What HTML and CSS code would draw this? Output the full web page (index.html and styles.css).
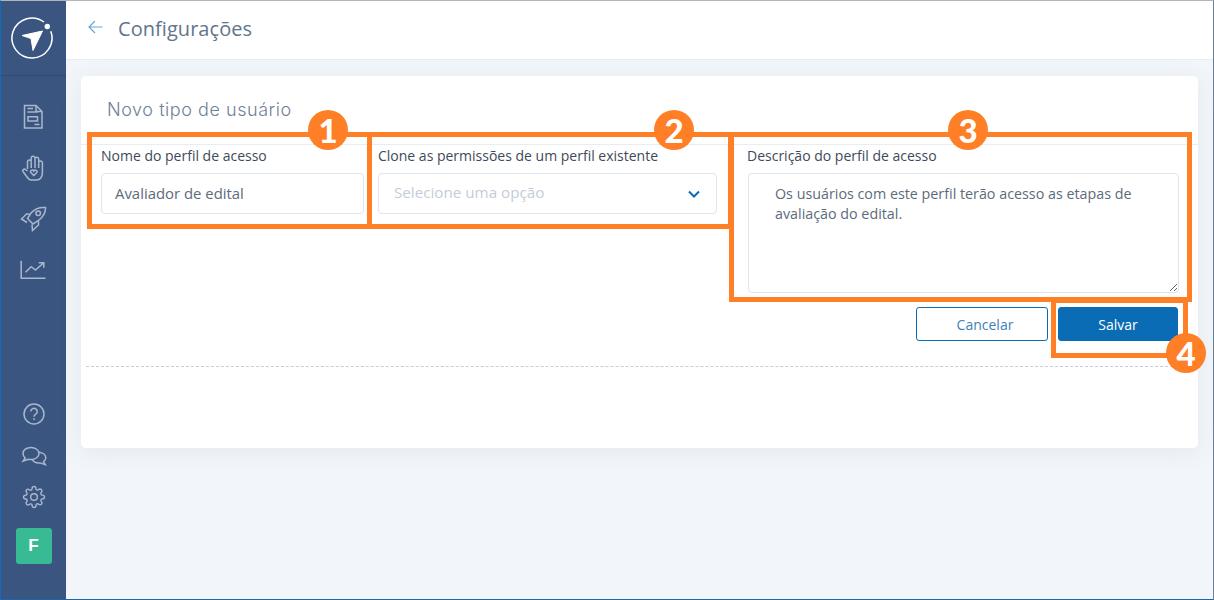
FILE: index.html
```html
<!DOCTYPE html>
<html lang="pt-BR">
<head>
<meta charset="utf-8">
<title>Configurações</title>
<link rel="stylesheet" href="styles.css">
</head>
<body>
<div class="app">
  <aside class="sidebar">
    <div class="logo-wrap">
      <svg class="logo" width="42" height="42" viewBox="0 0 42 42" fill="none">
        <path d="M33 5A20 20 0 1 0 39.800 14.200" stroke="#fff" stroke-width="1.500"/>
        <circle cx="36.300" cy="9.500" r="2.700" fill="#fff"/>
        <path d="M11 18.500 31.500 14 22 33.500 20 21.500Z" fill="#fff" stroke="#fff" stroke-linejoin="round"/>
      </svg>
    </div>
    <nav class="nav-top">
      <svg class="icon" width="28" height="26" viewBox="0 0 28 26" fill="none"><path d="M4.500 1.500H16L22 7.500V24H4.500z"/><path d="M16 1.500V7.500H22M7.500 4.500H13M7.500 8H18M8 12.800H17.500V17H8zM14.500 20.500H19.500"/></svg>
      <svg class="icon" width="28" height="26" viewBox="0 0 28 26" fill="none"><path d="M7.500 14V6.500a1.900 1.900 0 0 1 3.700 0V3.200a1.900 1.900 0 0 1 3.800 0V3.800a1.900 1.900 0 0 1 3.700 0V7.500a1.900 1.900 0 0 1 3.700 0V18c0 4-2.500 7-5.500 7H12c-2.500 0-4-1.500-5-3L3 16.500c-1-1.500 1-3 2.500-2L7.500 16"/><path d="M11.200 6.500V13M15 3.800V13M18.700 7.500V13"/><path d="M13.800 20.500l-3-3c-1.300-1.800 1.700-3.500 3-1.400 1.300-2.100 4.300-.4 3 1.400z"/></svg>
      <svg class="icon" width="28" height="26" viewBox="0 0 28 26" fill="none"><path d="M25.500 1.500c-6-.5-11 1.500-14.500 5.500L7.500 12.500 13 18l5.500-3.500C23 11 25.800 7 25.500 1.500z"/><path d="M9.500 8H6.500L1.500 13l5.500 3.500M18.500 15v4l-6 5.500-.5-6"/><circle cx="18.200" cy="7.300" r="2.300"/></svg>
      <svg class="icon" width="28" height="26" viewBox="0 0 28 26" fill="none"><path d="M1.200 3.700V21.300H25.500"/><path d="M5.500 15.300 11.200 9.700 15.500 13 23.200 6.300M18.800 5.700H23.800V10.700"/></svg>
    </nav>
    <nav class="nav-bottom">
      <svg class="icon" width="28" height="24" viewBox="0 0 28 24" fill="none"><circle cx="14" cy="12" r="10"/><path d="M10.800 9.500a3.200 3.200 0 1 1 4.800 2.800c-1 .6-1.600 1.200-1.600 2.400M14 16.300v1.700"/></svg>
      <svg class="icon" width="28" height="24" viewBox="0 0 28 24" fill="none"><path d="M11 3.500C6.500 3.500 3 6 3 9.500c0 1.800.8 3.200 2.200 4.300L3.200 17l5-1.800c.9.200 1.800.3 2.800.3 4.500 0 8-2.700 8-6S15.500 3.500 11 3.500z"/><path d="M19 8.200c3.800.5 6.800 2.800 6.800 5.600 0 1.600-.9 3-2.300 4l1.800 2.800-5.300-1.700c-3.500.3-6.500-1-7.800-3.200"/></svg>
      <svg class="icon" width="28" height="24" viewBox="0 0 28 24" fill="none"><g transform="translate(2.600 .6) scale(.95)"><circle cx="12" cy="12" r="3.500"/><path d="M19.400 15a1.650 1.650 0 0 0 .33 1.820l.06.06a2 2 0 0 1 0 2.830 2 2 0 0 1-2.830 0l-.06-.06a1.650 1.650 0 0 0-1.820-.33 1.650 1.650 0 0 0-1 1.510V21a2 2 0 0 1-2 2 2 2 0 0 1-2-2v-.09A1.650 1.650 0 0 0 9 19.400a1.650 1.650 0 0 0-1.820.33l-.06.06a2 2 0 0 1-2.830 0 2 2 0 0 1 0-2.830l.06-.06a1.650 1.650 0 0 0 .33-1.820 1.650 1.650 0 0 0-1.510-1H3a2 2 0 0 1-2-2 2 2 0 0 1 2-2h.09A1.650 1.650 0 0 0 4.600 9a1.650 1.650 0 0 0-.33-1.820l-.06-.06a2 2 0 0 1 0-2.830 2 2 0 0 1 2.830 0l.06.06a1.650 1.650 0 0 0 1.820.33H9a1.650 1.650 0 0 0 1-1.510V3a2 2 0 0 1 2-2 2 2 0 0 1 2 2v.09a1.650 1.650 0 0 0 1 1.510 1.650 1.650 0 0 0 1.820-.33l.06-.06a2 2 0 0 1 2.830 0 2 2 0 0 1 0 2.830l-.06.06a1.650 1.650 0 0 0-.33 1.820V9a1.650 1.650 0 0 0 1.510 1H21a2 2 0 0 1 2 2 2 2 0 0 1-2 2h-.09a1.650 1.650 0 0 0-1.510 1z"/></g></svg>
      <div class="avatar">F</div>
    </nav>
  </aside>
  <main class="main">
    <header class="topbar">
      <svg class="back" width="15" height="14" viewBox="0 0 15 14" fill="none" stroke="#6aa5dc" stroke-width="1.200"><path d="M14.500 7H1M7 1 1 7l6 6"/></svg>
      <h1 class="page-title">Configurações</h1>
    </header>
    <div class="content">
      <section class="card">
        <h2 class="card-title">Novo tipo de usuário</h2>
        <div class="form-grid">
          <div class="field">
            <label class="label">Nome do perfil de acesso</label>
            <div class="input"><span class="value">Avaliador de edital</span></div>
          </div>
          <div class="field">
            <label class="label">Clone as permissões de um perfil existente</label>
            <div class="input select"><span class="placeholder">Selecione uma opção</span>
              <svg width="12" height="8" viewBox="0 0 12 8" fill="none" stroke="#0a6cb4" stroke-width="2"><path d="M1 1.500 6 6.500l5-5"/></svg>
            </div>
          </div>
          <div class="field field-desc">
            <label class="label">Descrição do perfil de acesso</label>
            <textarea class="textarea" readonly>Os usuários com este perfil terão acesso as etapas de avaliação do edital.</textarea>
          </div>
        </div>
        <div class="actions">
          <button class="btn btn-ghost">Cancelar</button>
          <button class="btn btn-primary">Salvar</button>
        </div>
        <div class="dashed"></div>
      </section>
    </div>
  </main>
</div>
<div class="mark mark-1"></div>
<div class="mark mark-2"></div>
<div class="mark mark-3"></div>
<div class="mark mark-4"></div>
<div class="badge badge-1">1</div>
<div class="badge badge-2">2</div>
<div class="badge badge-3">3</div>
<div class="badge badge-4">4</div>
</body>
</html>
```
FILE: styles.css
```css
* { box-sizing: border-box; }
html, body { margin: 0; height: 100%; }
body { position: relative; width: 1214px; height: 600px; overflow: hidden; font-family: "Open Sans", sans-serif; background: #f2f6fa; }
.app { display: flex; width: 1214px; height: 600px; border-top: 1px solid #b5b5b5; border-left: 1px solid #0f6cbd; border-bottom: 1px solid #1f66a8; border-right: 1px solid #6d7f96; }
.sidebar { width: 65px; flex: none; background: #3a5680; display: flex; flex-direction: column; align-items: center; }
.logo-wrap { width: 100%; height: 75px; border-bottom: 1px solid #2e4a74; display: flex; align-items: center; justify-content: center; padding: 0 3px 1px 0; }
.icon { stroke: #a9b7cc; stroke-width: 1.500; flex: none; }
.nav-top { display: flex; flex-direction: column; align-items: center; gap: 25px; margin-top: 28px; }
.nav-bottom { display: flex; flex-direction: column; align-items: center; gap: 17.500px; margin-top: auto; margin-bottom: 35px; }
.avatar { width: 36px; height: 36px; border-radius: 3px; background: #38bb94; color: #fff; font: 700 17px "Liberation Sans", sans-serif; display: flex; align-items: center; justify-content: center; margin-top: 1.500px; }
.main { flex: 1; display: flex; flex-direction: column; min-width: 0; }
.topbar { height: 59px; flex: none; background: #fff; border-bottom: 1px solid #e6edf3; display: flex; align-items: center; padding-left: 22px; gap: 15px; }
.back { margin-top: -6px; }
.page-title { margin: 0 0 4px; font-size: 20px; font-weight: 400; color: #62758c; letter-spacing: .05px; }
.content { flex: 1; padding: 16px 15px 0; background: #f2f6fa; }
.card { height: 372px; background: #fff; border-radius: 5px; box-shadow: 0 4px 24px rgba(60, 80, 110, .08); }
.card-title { margin: 0; height: 69px; padding: 22px 0 0 26px; font: 300 18px/24px Inter, sans-serif; letter-spacing: .55px; color: #6f8197; border-bottom: 1px solid #e6edf3; }
.form-grid { display: grid; grid-template-columns: 263px 339px 432px; column-gap: 14px; padding-left: 20px; margin-top: 1px; }
.field { display: flex; flex-direction: column; }
.field-desc { margin-left: 16px; }
.label { font-size: 14px; line-height: 18px; color: #3e4a5a; height: 27px; padding-top: 1px; white-space: nowrap; }
.input { height: 41px; border: 1px solid #dde5ef; border-radius: 4px; padding: 0 13px; display: flex; align-items: center; font-size: 14.900px; color: #5d6b7c; }
.value { margin-top: -2px; }
.select { justify-content: space-between; padding: 0 16px 0 15px; color: #c5ccd8; }
.placeholder { margin-top: -3px; font-size: 15.200px; }
.textarea { display: block; height: 120px; width: 431px; margin-left: 1px; border: 1px solid #dde5ef; border-radius: 4px; padding: 10px 26px; font: 14.300px/20px "Open Sans", sans-serif; color: #5d6b7c; outline: none; }
.actions { display: flex; justify-content: flex-end; gap: 10px; padding-right: 20px; margin-top: 14px; }
.btn { height: 34px; width: 120px; border-radius: 3px; font: 14px "Open Sans", sans-serif; padding: 0; }
.btn-ghost { width: 132px; background: #fff; border: 1px solid #0a6cb4; color: #3f7fb8; padding-left: 6px; }
.btn-primary { background: #0a6cb4; border: 1px solid #0a6cb4; color: #fff; }
.dashed { margin: 25px 0 0 5px; width: 1107px; border-top: 1px dashed #c9ced4; }
.mark { position: absolute; border: 5px solid #ff7f27; pointer-events: none; }
.mark-1 { left: 87px; top: 132px; width: 285px; height: 97px; }
.mark-2 { left: 367px; top: 132px; width: 366px; height: 97px; }
.mark-3 { left: 729px; top: 132px; width: 463px; height: 170px; }
.mark-4 { left: 1051px; top: 298px; width: 137px; height: 60px; }
.badge { position: absolute; width: 40px; height: 40px; border-radius: 50%; background: #ff7f27; color: #fff; font: 900 33px/40px Lato, sans-serif; text-align: center; }
.badge-1 { left: 308px; top: 110px; }
.badge-2 { left: 654px; top: 110px; }
.badge-3 { left: 948px; top: 110px; }
.badge-4 { left: 1166px; top: 333px; }
```
